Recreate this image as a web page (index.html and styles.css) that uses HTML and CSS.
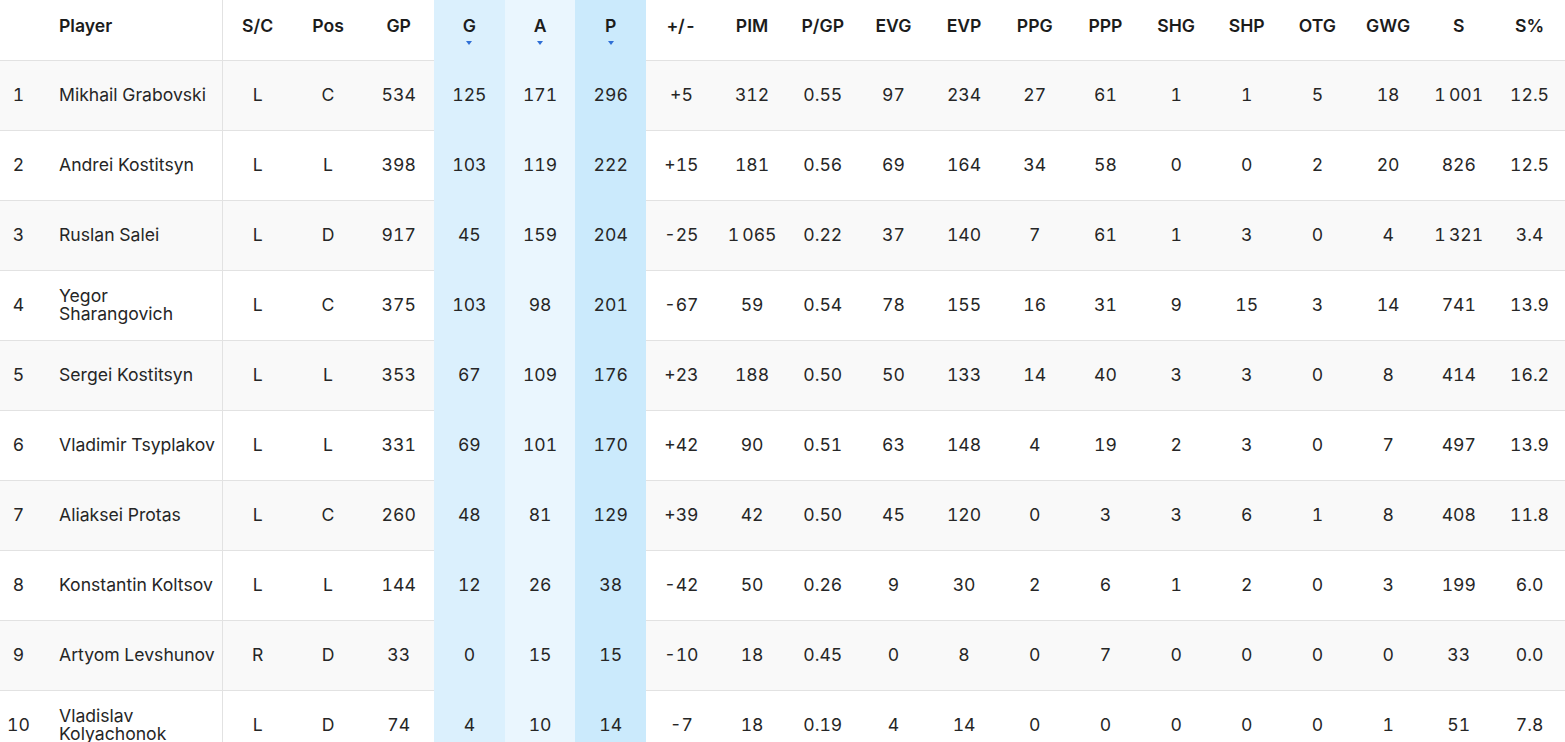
FILE: index.html
```html
<!DOCTYPE html>
<html lang="en">
<head>
<meta charset="utf-8">
<title>Player stats</title>
<link rel="stylesheet" href="styles.css">
</head>
<body>
<table class="stats">
  <colgroup>
    <col class="c-rank"><col class="c-name">
    <col span="19" class="c-stat">
  </colgroup>
  <thead>
    <tr>
      <th class="rank"></th>
      <th class="name"><span class="lbl">Player</span></th>
      <th><span class="lbl">S/C</span></th>
      <th><span class="lbl">Pos</span></th>
      <th><span class="lbl">GP</span></th>
      <th class="hl-g"><span class="lbl">G</span><span class="arrow"></span></th>
      <th class="hl-a"><span class="lbl">A</span><span class="arrow"></span></th>
      <th class="hl-p"><span class="lbl">P</span><span class="arrow"></span></th>
      <th><span class="lbl">+/-</span></th>
      <th><span class="lbl">PIM</span></th>
      <th><span class="lbl">P/GP</span></th>
      <th><span class="lbl">EVG</span></th>
      <th><span class="lbl">EVP</span></th>
      <th><span class="lbl">PPG</span></th>
      <th><span class="lbl">PPP</span></th>
      <th><span class="lbl">SHG</span></th>
      <th><span class="lbl">SHP</span></th>
      <th><span class="lbl">OTG</span></th>
      <th><span class="lbl">GWG</span></th>
      <th><span class="lbl">S</span></th>
      <th><span class="lbl">S%</span></th>
    </tr>
  </thead>
  <tbody>
    <tr><td class="rank">1</td><td class="name">Mikhail Grabovski</td><td>L</td><td>C</td><td>534</td><td class="hl-g">125</td><td class="hl-a">171</td><td class="hl-p">296</td><td>+5</td><td>312</td><td>0.55</td><td>97</td><td>234</td><td>27</td><td>61</td><td>1</td><td>1</td><td>5</td><td>18</td><td>1&#8201;001</td><td>12.5</td></tr>
    <tr><td class="rank">2</td><td class="name">Andrei Kostitsyn</td><td>L</td><td>L</td><td>398</td><td class="hl-g">103</td><td class="hl-a">119</td><td class="hl-p">222</td><td>+15</td><td>181</td><td>0.56</td><td>69</td><td>164</td><td>34</td><td>58</td><td>0</td><td>0</td><td>2</td><td>20</td><td>826</td><td>12.5</td></tr>
    <tr><td class="rank">3</td><td class="name">Ruslan Salei</td><td>L</td><td>D</td><td>917</td><td class="hl-g">45</td><td class="hl-a">159</td><td class="hl-p">204</td><td>-25</td><td>1&#8201;065</td><td>0.22</td><td>37</td><td>140</td><td>7</td><td>61</td><td>1</td><td>3</td><td>0</td><td>4</td><td>1&#8201;321</td><td>3.4</td></tr>
    <tr><td class="rank">4</td><td class="name">Yegor Sharangovich</td><td>L</td><td>C</td><td>375</td><td class="hl-g">103</td><td class="hl-a">98</td><td class="hl-p">201</td><td>-67</td><td>59</td><td>0.54</td><td>78</td><td>155</td><td>16</td><td>31</td><td>9</td><td>15</td><td>3</td><td>14</td><td>741</td><td>13.9</td></tr>
    <tr><td class="rank">5</td><td class="name">Sergei Kostitsyn</td><td>L</td><td>L</td><td>353</td><td class="hl-g">67</td><td class="hl-a">109</td><td class="hl-p">176</td><td>+23</td><td>188</td><td>0.50</td><td>50</td><td>133</td><td>14</td><td>40</td><td>3</td><td>3</td><td>0</td><td>8</td><td>414</td><td>16.2</td></tr>
    <tr><td class="rank">6</td><td class="name">Vladimir Tsyplakov</td><td>L</td><td>L</td><td>331</td><td class="hl-g">69</td><td class="hl-a">101</td><td class="hl-p">170</td><td>+42</td><td>90</td><td>0.51</td><td>63</td><td>148</td><td>4</td><td>19</td><td>2</td><td>3</td><td>0</td><td>7</td><td>497</td><td>13.9</td></tr>
    <tr><td class="rank">7</td><td class="name">Aliaksei Protas</td><td>L</td><td>C</td><td>260</td><td class="hl-g">48</td><td class="hl-a">81</td><td class="hl-p">129</td><td>+39</td><td>42</td><td>0.50</td><td>45</td><td>120</td><td>0</td><td>3</td><td>3</td><td>6</td><td>1</td><td>8</td><td>408</td><td>11.8</td></tr>
    <tr><td class="rank">8</td><td class="name">Konstantin Koltsov</td><td>L</td><td>L</td><td>144</td><td class="hl-g">12</td><td class="hl-a">26</td><td class="hl-p">38</td><td>-42</td><td>50</td><td>0.26</td><td>9</td><td>30</td><td>2</td><td>6</td><td>1</td><td>2</td><td>0</td><td>3</td><td>199</td><td>6.0</td></tr>
    <tr><td class="rank">9</td><td class="name">Artyom Levshunov</td><td>R</td><td>D</td><td>33</td><td class="hl-g">0</td><td class="hl-a">15</td><td class="hl-p">15</td><td>-10</td><td>18</td><td>0.45</td><td>0</td><td>8</td><td>0</td><td>7</td><td>0</td><td>0</td><td>0</td><td>0</td><td>33</td><td>0.0</td></tr>
    <tr><td class="rank">10</td><td class="name">Vladislav Kolyachonok</td><td>L</td><td>D</td><td>74</td><td class="hl-g">4</td><td class="hl-a">10</td><td class="hl-p">14</td><td>-7</td><td>18</td><td>0.19</td><td>4</td><td>14</td><td>0</td><td>0</td><td>0</td><td>0</td><td>0</td><td>1</td><td>51</td><td>7.8</td></tr>
  </tbody>
</table>
</body>
</html>
```

FILE: styles.css
```css
html, body {
  margin: 0;
  padding: 0;
  background: #ffffff;
}

body {
  font-family: Inter, "Noto Sans", "Liberation Sans", sans-serif;
  color: #222222;
  overflow: hidden;
}

.stats {
  width: 1565px;
  table-layout: fixed;
  border-collapse: collapse;
  border-spacing: 0;
  font-size: 17.6px;
  font-variant-numeric: tabular-nums;
}

.c-rank { width: 47px; }
.c-name { width: 175px; }
.c-stat { width: 70.68px; }

.stats th,
.stats td {
  padding: 0 4px;
  text-align: center;
  border-bottom: 1px solid #e2e2e2;
}

.stats th {
  height: 60px;
  box-sizing: border-box;
  vertical-align: top;
  padding-top: 15px;
  font-weight: 600;
  color: #1c1c1c;
  background: #ffffff;
}

.stats th .lbl {
  display: block;
  line-height: 21px;
}

.stats th .arrow {
  display: block;
  width: 0;
  height: 0;
  margin: 5px auto 0;
  border-left: 3.5px solid transparent;
  border-right: 3.5px solid transparent;
  border-top: 4px solid #2f6fd6;
}

.stats td {
  height: 70px;
  box-sizing: border-box;
  vertical-align: middle;
  line-height: 18px;
  color: #262626;
}

.stats tbody tr:nth-child(odd) td {
  background: #f9f9f9;
}

.stats .rank {
  text-align: center;
  padding-left: 0;
  padding-right: 10px;
}

.stats .name {
  text-align: left;
  padding-left: 12px;
  padding-right: 3px;
  border-right: 1px solid #e2e2e2;
}

.stats th.hl-g,
.stats tbody tr td.hl-g {
  background: #dbf0fd;
  border-bottom-color: #dbf0fd;
}

.stats th.hl-a,
.stats tbody tr td.hl-a {
  background: #eaf6fe;
  border-bottom-color: #eaf6fe;
}

.stats th.hl-p,
.stats tbody tr td.hl-p {
  background: #cbeafc;
  border-bottom-color: #cbeafc;
}
```
